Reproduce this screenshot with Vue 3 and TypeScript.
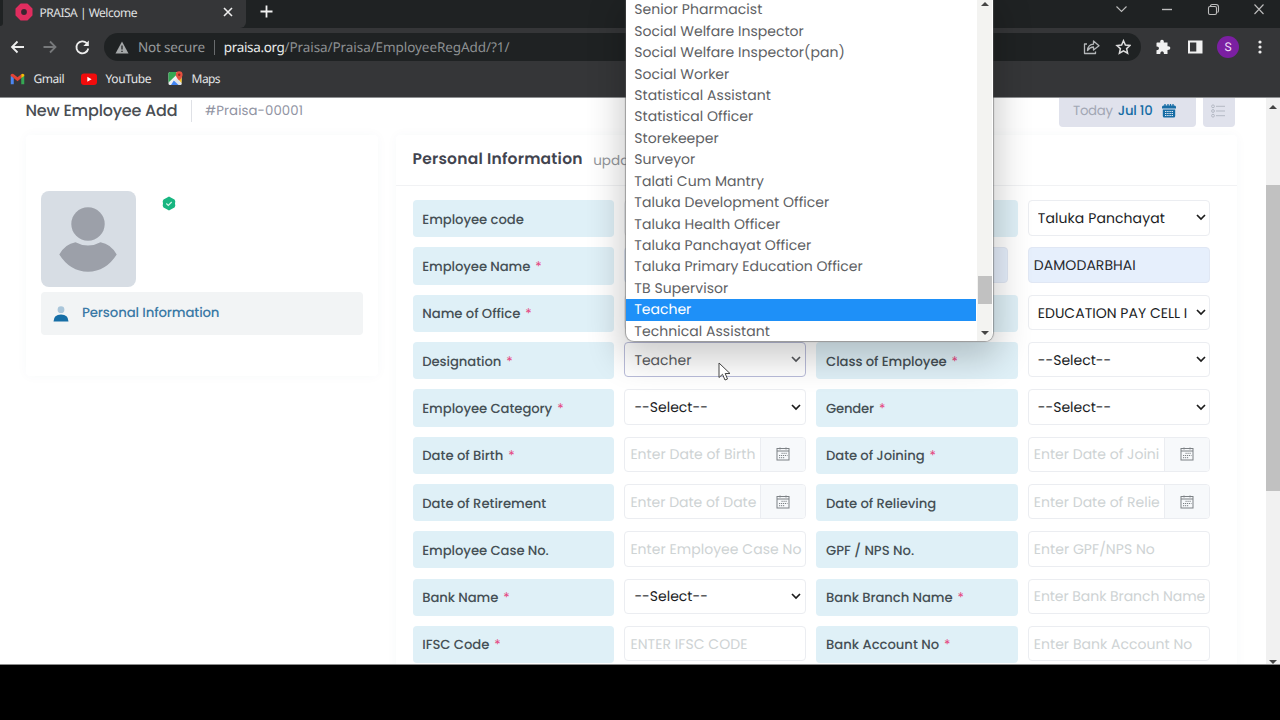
<script setup lang="ts">
import type { Directive } from 'vue'

type Label = { text: string; w: number; req?: boolean }
type Control = {
  kind: 'select' | 'input' | 'date' | 'filled' | 'focus'
  text: string
  w: number
}
type Row = { a: Label; b: Control; c: Label | null; d: Control }

/* Spreads the letters so that a text takes the given width in pixels. */
const vFit: Directive<HTMLElement, number> = {
  mounted(el, { value }) {
    const count = (el.textContent ?? '').length
    if (!value || count < 2) return
    const natural = el.getBoundingClientRect().width
    const step = (value - natural) / (count - 1)
    el.style.letterSpacing = `${step.toFixed(3)}px`
  },
}

const bookmarks = [
  { id: 'gmail', text: 'Gmail', w: 31 },
  { id: 'youtube', text: 'YouTube', w: 46 },
  { id: 'maps', text: 'Maps', w: 29 },
]

const options = [
  { text: 'Senior Pharmacist', w: 128 },
  { text: 'Social Welfare Inspector', w: 169.5 },
  { text: 'Social Welfare Inspector(pan)', w: 210.5 },
  { text: 'Social Worker', w: 95 },
  { text: 'Statistical Assistant', w: 136.5 },
  { text: 'Statistical Officer', w: 119 },
  { text: 'Storekeeper', w: 84.5 },
  { text: 'Surveyor', w: 61 },
  { text: 'Talati Cum Mantry', w: 129.5 },
  { text: 'Taluka Development Officer', w: 195 },
  { text: 'Taluka Health Officer', w: 146 },
  { text: 'Taluka Panchayat Officer', w: 177 },
  { text: 'Taluka Primary Education Officer', w: 228.5 },
  { text: 'TB Supervisor', w: 94 },
  { text: 'Teacher', w: 57 },
  { text: 'Technical Assistant', w: 135.5 },
]

const select = (text = '--Select--', w = 73.5): Control => ({ kind: 'select', text, w })

const rows: Row[] = [
  { a: { text: 'Employee code', w: 101.5 }, b: { kind: 'input', text: '', w: 0 }, c: { text: '', w: 0 }, d: select('Taluka Panchayat', 127) },
  { a: { text: 'Employee Name', w: 108, req: true }, b: { kind: 'filled', text: '', w: 0 }, c: null, d: { kind: 'filled', text: 'DAMODARBHAI', w: 102 } },
  { a: { text: 'Name of Office', w: 98, req: true }, b: { kind: 'select', text: '', w: 0 }, c: { text: '', w: 0 }, d: select('EDUCATION PAY CELL I', 149.5) },
  { a: { text: 'Designation', w: 79, req: true }, b: { kind: 'focus', text: 'Teacher', w: 57 }, c: { text: 'Class of Employee', w: 120.5, req: true }, d: select() },
  { a: { text: 'Employee Category', w: 130, req: true }, b: select(), c: { text: 'Gender', w: 48, req: true }, d: select() },
  { a: { text: 'Date of Birth', w: 81, req: true }, b: { kind: 'date', text: 'Enter Date of Birth', w: 125 }, c: { text: 'Date of Joining', w: 98.5, req: true }, d: { kind: 'date', text: 'Enter Date of Joini', w: 125.5 } },
  { a: { text: 'Date of Retirement', w: 124 }, b: { kind: 'date', text: 'Enter Date of Date', w: 126 }, c: { text: 'Date of Relieving', w: 110 }, d: { kind: 'date', text: 'Enter Date of Relie', w: 126 } },
  { a: { text: 'Employee Case No.', w: 126.5 }, b: { kind: 'input', text: 'Enter Employee Case No', w: 171 }, c: { text: 'GPF / NPS No.', w: 88 }, d: { kind: 'input', text: 'Enter GPF/NPS No', w: 121 } },
  { a: { text: 'Bank Name', w: 76, req: true }, b: select(), c: { text: 'Bank Branch Name', w: 126.5, req: true }, d: { kind: 'input', text: 'Enter Bank Branch Name', w: 171.5 } },
  { a: { text: 'IFSC Code', w: 67, req: true }, b: { kind: 'input', text: 'ENTER IFSC CODE', w: 117 }, c: { text: 'Bank Account No', w: 113, req: true }, d: { kind: 'input', text: 'Enter Bank Account No', w: 158.5 } },
]
</script>

<template>
  <div class="screen">
    <header class="chrome">
      <div class="tabs">
        <div class="tab-edge"></div>
        <div class="tab">
          <svg class="favicon" width="18" height="18" viewBox="0 0 18 18">
            <path d="M6 1.500H12L16.500 6V12L12 16.500H6L1.500 12V6Z" fill="#e02d5f" stroke="#e02d5f" stroke-width="2" stroke-linejoin="round" />
            <circle cx="9" cy="9" r="2.900" fill="#3a2530" />
          </svg>
          <span v-fit="98" class="tab-title">PRAISA | Welcome</span>
          <svg class="tab-close" width="10" height="10" viewBox="0 0 10 10"><path d="M1 1 9 9M9 1 1 9" stroke="#eee" stroke-width="1.600" /></svg>
        </div>
        <svg class="plus" width="13" height="13" viewBox="0 0 13 13"><path d="M6.500 .5V12.500M.5 6.500H12.500" stroke="#f2f2f2" stroke-width="1.800" /></svg>
        <svg class="win" width="150" height="14" viewBox="0 0 150 14" fill="none" stroke="#bdbdbd" stroke-width="1.100">
          <path d="M1.500 4.500 6.500 9.500 11.500 4.500" />
          <path d="M47 7.500H57" stroke-width="1.400" />
          <rect x="93.500" y="4.500" width="8" height="8" rx="1.500" />
          <path d="M95.500 4V3.500Q96 2.500 97.500 2.500H101Q103.500 2.500 103.500 5V8.500Q103.500 10 102.500 10.500" />
          <path d="M139.500 2.500 148.500 12M148.500 2.500 139.500 12" />
        </svg>
      </div>

      <div class="toolbar">
        <svg class="nav" width="84" height="16" viewBox="0 0 84 16" fill="none" stroke-width="1.800">
          <path d="M15 8H3.500M8.500 2.500 3 8 8.500 13.500" stroke="#eee" />
          <path d="M34.500 8H46M41 2.500 46.500 8 41 13.500" stroke="#77797b" />
          <path d="M77.800 4.200A6 6 0 1 0 79.300 9.500" stroke="#eee" />
          <path d="M79.800 1.500V7H74.300Z" fill="#eee" />
        </svg>
        <div class="omnibox">
          <svg class="warn" width="14" height="13" viewBox="0 0 14 13"><path d="M7 .5 13.500 12.500H.5Z" fill="#a5a8a9" /><path d="M7 4.500V8.500M7 9.700V11" stroke="#202324" stroke-width="1.300" /></svg>
          <span v-fit="67" class="insecure">Not secure</span>
          <i class="omni-sep"></i>
          <span v-fit="61" class="host">praisa.org</span>
          <span v-fit="225" class="path">/Praisa/Praisa/EmployeeRegAdd/?1/</span>
          <svg class="omni-icons" width="48" height="16" viewBox="0 0 48 16" fill="none" stroke="#b4b7b9" stroke-width="1.300" stroke-linejoin="round">
            <path d="M4 5H1.500V14.500H12.500V12.500" />
            <path d="M4.500 11.500Q5 5.500 10.500 5.200V2L16 6.800 10.500 11V8Q7 8 4.500 11.500Z" />
            <path d="M40.500 1.700 42.400 6 47 6.500 43.600 9.600 44.600 14.200 40.500 11.800 36.400 14.200 37.400 9.600 34 6.500 38.600 6Z" stroke="#dedede" stroke-width="1.500" stroke-linejoin="miter" />
          </svg>
        </div>
        <svg class="ext" width="48" height="16" viewBox="0 0 48 16">
          <path d="M2 3.500H5.300Q4.800 .8 7 .8T8.800 3.500H12.500V7.200Q15.400 6.900 15.400 9T12.500 11V15H9Q9 12.300 7.100 12.300T5.200 15H1.500V11.300Q4 11.200 4 9.200T1.500 7.400V4Z" fill="#f1f1f1" />
          <path d="M33 1.500H47.500V14.500H33Z M35 3.500V12.500H41.300V3.500Z" fill="#f1f1f1" fill-rule="evenodd" />
        </svg>
        <div class="avatar">S</div>
        <svg class="dots" width="4" height="14" viewBox="0 0 4 14" fill="#eee"><circle cx="2" cy="2" r="1.600" /><circle cx="2" cy="7" r="1.600" /><circle cx="2" cy="12" r="1.600" /></svg>
      </div>

      <div class="bookmarks">
        <div v-for="b in bookmarks" :key="b.id" class="bookmark" :class="b.id">
          <svg v-if="b.id === 'gmail'" width="15" height="14" viewBox="0 0 16 14">
            <path d="M.8 3V12.500H4V6Z" fill="#4c86f0" />
            <path d="M15.200 3V12.500H12V6Z" fill="#35a853" />
            <path d="M.8 2.500Q2 .8 4 2L8 5.200 12 2V6L8 9.300 4 6 .8 3.700Z" fill="#e24335" />
            <path d="M12 2Q14 .8 15.200 2.500V3.700L12 6Z" fill="#f8bb08" />
          </svg>
          <svg v-else-if="b.id === 'youtube'" width="16" height="14" viewBox="0 0 16 14">
            <rect x="0" y="1.500" width="16" height="11.500" rx="3" fill="#f20c0c" /><path d="M6.300 4.800 10.600 7.200 6.300 9.700Z" fill="#fff" />
          </svg>
          <svg v-else width="15" height="15" viewBox="0 0 15 15">
            <rect x=".5" y="1" width="13" height="13" rx="1.500" fill="#eef0f2" />
            <path d="M.5 2.500Q.5 1 2 1H8.500L8.300 4 .5 11.500Z" fill="#34a853" />
            <path d="M9 7.500 13.500 12.500V13Q13.500 14 12 14H8.500L5.500 10.800Z" fill="#dfe3e8" />
            <path d="M5.800 9.500 10.500 14H3Z" fill="#4285f4" />
            <path d="M10.500 8.500 13.500 6V12Z" fill="#fbc117" />
            <path d="M11.200 9.500Q7.800 6 7.800 3.700A3.400 3.400 0 0 1 14.600 3.700Q14.600 6 11.200 9.500Z" fill="#e5503f" />
            <circle cx="11.200" cy="3.700" r="1.200" fill="#8d2a20" />
          </svg>
          <span v-fit="b.w">{{ b.text }}</span>
        </div>
      </div>
    </header>

    <main class="page">
      <div class="content">
        <div class="heading">
          <h1><span v-fit="152">New Employee Add</span></h1>
          <i class="head-sep"></i>
          <span v-fit="98" class="ref">#Praisa-00001</span>
          <div class="today">
            <span v-fit="40" class="today-word">Today</span>
            <span v-fit="35" class="today-date">Jul 10</span>
            <svg width="14" height="14" viewBox="0 0 14 14">
              <path d="M0 3Q0 1.500 1.500 1.500H12.500Q14 1.500 14 3V4.500H0ZM.8 5.500H13.200V12Q13.200 13.500 11.700 13.500H2.300Q.8 13.500 .8 12Z" fill="#176da5" />
              <path d="M3 0V3M6 0V3M8.500 0V3M11 0V3" stroke="#176da5" stroke-width="1.300" />
              <path d="M3 7.500H11M3 9.500H11M3 11.500H11" stroke="#e3e9f3" stroke-width="1.200" stroke-dasharray="1.400 .8" />
            </svg>
          </div>
          <div class="listbtn">
            <svg width="15" height="14" viewBox="0 0 15 14" fill="none" stroke="#b4b9c4"><circle cx="2" cy="2.300" r="1.400" /><circle cx="2" cy="7" r="1.400" /><circle cx="2" cy="11.700" r="1.400" /><path d="M5 2.300H14M5 7H14M5 11.700H14" /></svg>
          </div>
        </div>

        <div class="cards">
          <aside class="card profile">
            <div class="who">
              <svg class="photo" width="95" height="96" viewBox="0 0 95 96">
                <rect width="95" height="96" rx="8" fill="#d7dde4" />
                <circle cx="47" cy="33" r="16.700" fill="#9ca0a9" />
                <path d="M18.300 63.500Q24 53 34.500 51.200Q47 58 59.500 51.200Q70 53 75.700 63.500Q65 80.500 47 80.700Q29 80.500 18.300 63.500Z" fill="#9ca0a9" />
              </svg>
              <svg class="verified" width="14" height="15" viewBox="0 0 14 15"><path d="M7 .5 9.200 1.800 12.500 3.500 13.300 5.200 13 7.500 13.300 9.800 12.500 11.500 9.200 13.200 7 14.500 4.800 13.200 1.500 11.500 .7 9.800 1 7.500 .7 5.200 1.500 3.500 4.800 1.800Z" fill="#18b681" /><path d="M4.300 7.500 6.300 9.500 9.700 6" fill="none" stroke="#d6f7ea" stroke-width="1.100" /></svg>
            </div>
            <div class="menu-item">
              <svg width="16" height="16" viewBox="0 0 16 16"><circle cx="8" cy="3.700" r="3.400" fill="#aac6da" /><path d="M.5 15.500Q.8 8.600 8 8.600T15.500 15.500Z" fill="#166ea6" /></svg>
              <span v-fit="137.500">Personal Information</span>
            </div>
          </aside>

          <section class="card form">
            <div class="form-head">
              <span v-fit="170" class="form-title">Personal Information</span>
              <span class="form-sub">upda</span>
            </div>
            <div class="rows">
              <div v-for="(r, i) in rows" :key="i" class="row">
                <div class="label"><span v-fit="r.a.w">{{ r.a.text }}</span><b v-if="r.a.req">*</b></div>
                <div class="control" :class="r.b.kind">
                  <div class="value"><span v-fit="r.b.w">{{ r.b.text }}</span></div>
                  <svg v-if="r.b.kind === 'select' || r.b.kind === 'focus'" class="chev" width="10" height="7" viewBox="0 0 10 7"><path d="M1 1 5 5 9 1" /></svg>
                  <div v-if="r.b.kind === 'date'" class="cal">
                    <svg width="14" height="14" viewBox="0 0 14 14"><rect x="1" y="1.500" width="12" height="11.500" /><path d="M1 4H13M4 .5V2.500M10 .5V2.500" /><path d="M5.500 6.300H11.500M3 8.500H11.500M3 10.700H9" stroke-dasharray="1.200 .8" /></svg>
                  </div>
                </div>
                <div v-if="r.c" class="label"><span v-fit="r.c.w">{{ r.c.text }}</span><b v-if="r.c.req">*</b></div>
                <div v-else class="control filled middle"></div>
                <div class="control last" :class="r.d.kind">
                  <div class="value"><span v-fit="r.d.w">{{ r.d.text }}</span></div>
                  <svg v-if="r.d.kind === 'select'" class="chev" width="10" height="7" viewBox="0 0 10 7"><path d="M1 1 5 5 9 1" /></svg>
                  <div v-if="r.d.kind === 'date'" class="cal">
                    <svg width="14" height="14" viewBox="0 0 14 14"><rect x="1" y="1.500" width="12" height="11.500" /><path d="M1 4H13M4 .5V2.500M10 .5V2.500" /><path d="M5.500 6.300H11.500M3 8.500H11.500M3 10.700H9" stroke-dasharray="1.200 .8" /></svg>
                  </div>
                </div>
              </div>
            </div>
          </section>
        </div>
      </div>
      <div class="scrollbar">
        <i class="arrow up"></i>
        <i class="thumb"></i>
        <i class="arrow down"></i>
      </div>
    </main>

    <div class="dropdown">
      <ul class="options">
        <li v-for="o in options" :key="o.text" :class="{ on: o.text === 'Teacher' }"><span v-fit="o.w">{{ o.text }}</span></li>
      </ul>
      <div class="drop-scroll">
        <i class="arrow up"></i>
        <i class="thumb"></i>
        <i class="arrow down"></i>
      </div>
    </div>

    <svg class="cursor" width="14" height="20" viewBox="0 0 14 20"><path d="M1 1V15.500L4.500 12.300 7 18 9.500 17 7.200 11.500H12Z" fill="#fff" stroke="#444" stroke-width="1" stroke-linejoin="round" /></svg>
  </div>
</template>

<style>
body {
  background: #000;
  overflow: hidden;
}
</style>

<style scoped>
.screen {
  position: relative;
  width: 1280px;
  height: 720px;
  overflow: hidden;
  background: #000;
  font-family: Poppins, Inter, "Liberation Sans", sans-serif;
  text-rendering: geometricPrecision;
}
.screen * { box-sizing: border-box; }
span { display: inline-block; white-space: pre; }
svg { display: block; flex: none; }

.chrome {
  height: 98px;
  background: #353638;
  font-family: "Segoe UI", "Noto Sans", "Open Sans", sans-serif;
}
.tabs { display: flex; height: 28px; background: #1f2223; align-items: flex-start; }
.tab-edge { width: 3px; height: 26px; border-radius: 0 0 4px 0; background: #1f2223; position: relative; z-index: 1; }
.tabs .tab {
  width: 246px;
  height: 28px;
  margin-left: -3px;
  padding: 0 0 4px 15px;
  background: #353638;
  border-radius: 0 0 6px 0;
  display: flex;
  align-items: center;
}
.tab-title { margin-left: 6.500px; font-size: 12px; color: #e0e2e3; }
.tab-close { margin-left: 86px; }
.plus { margin: 5px 0 0 14px; }
.win { margin: 2px 15.500px 0 auto; }
.toolbar { display: flex; height: 38px; align-items: center; }
.nav { margin-left: 9px; }
.omnibox {
  width: 1037px;
  height: 28px;
  margin-left: 11px;
  border-radius: 14px;
  background: #1f2223;
  display: flex;
  align-items: center;
  padding-left: 11px;
  font-size: 13.500px;
}
.insecure { margin-left: 9px; color: #96999b; }
.omni-sep { width: 1px; height: 15px; margin: 0 9px 0 9px; background: #696c6e; }
.host { color: #e8eaea; }
.path { color: #8d9092; }
.omni-icons { margin: 0 10px 0 auto; }
.ext { margin-left: 14px; }
.avatar {
  width: 22px;
  height: 22px;
  margin-left: 14px;
  border-radius: 50%;
  background: #7b1fa2;
  color: #f1dff7;
  font: 12px/22px Roboto, sans-serif;
  text-align: center;
}
.dots { margin-left: 19px; }
.bookmarks { display: flex; height: 32px; border-bottom: 1px solid #8e9092; align-items: center; padding: 0 0 6px 10px; font-size: 12px; color: #e4e6e8; }
.bookmark { display: flex; align-items: center; }
.bookmark span { margin-left: 8.500px; }
.youtube, .maps { margin-left: 17px; }

.page { display: flex; height: 567px; overflow: hidden; background: #fff; border-bottom: 1px solid #8c8c8c; }
.content { flex: 1; min-width: 0; padding-left: 26px; }
.heading { display: flex; height: 37px; align-items: flex-start; }
h1 { width: 151px; margin: 1px 0 0 -0.5px; font-size: 16px; line-height: 24px; font-weight: 500; color: #4a4e53; }
.head-sep { width: 1px; height: 22px; margin: 2px 13px 0 14.500px; background: #dfe1e6; }
.ref { margin-top: 1px; font-size: 13.300px; line-height: 24px; color: #9194a3; }
.today, .listbtn { display: flex; align-items: center; height: 29px; background: #e0e2ec; border-radius: 0 0 4px 4px; }
.today { width: 137px; margin-left: auto; padding: 0 0 3px 14px; font-size: 13.300px; }
.today-word { color: #a3a8b5; }
.today-date { margin-left: 5px; color: #176da5; font-weight: 500; }
.today svg { margin-left: 10px; }
.listbtn { width: 32px; margin: 0 31px 0 7px; padding: 0 0 3px 8px; }
.cards { display: flex; align-items: flex-start; gap: 18px; }
.card { background: #fff; border-radius: 4px; box-shadow: 0 0 12px rgba(70, 80, 100, 0.035); }
.profile { width: 352px; height: 241px; padding: 55.600px 15px 0; }
.who { display: flex; align-items: flex-start; }
.verified { margin: 5.600px 0 0 26px; }
.menu-item { display: flex; align-items: center; width: 322px; height: 43px; margin-top: 5px; padding: 0 0 0 12px; background: #f2f4f5; border-radius: 4px; font-size: 13.300px; font-weight: 500; color: #3c7aa6; }
.menu-item svg { margin-top: 2px; }
.menu-item span { margin-left: 13px; }
.form { width: 841px; height: 620px; }
.form-head { display: flex; align-items: center; height: 50.500px; border-bottom: 1px solid #f1f2f4; padding-left: 16.500px; }
.form-title { font-size: 15.500px; font-weight: 600; color: #42444f; }
.form-sub { margin: 2px 0 0 10.500px; font-size: 13.500px; color: #93969b; }
.rows { padding: 14.700px 0 0 16.600px; }
.row { display: flex; height: 47.300px; align-items: flex-start; }
.label {
  display: flex;
  align-items: center;
  width: 201.300px;
  height: 37.200px;
  padding: 2px 0 0 9.700px;
  border-radius: 4px;
  background: #dff0f7;
  color: #465056;
  font-size: 13.200px;
  font-weight: 500;
}
.label b { margin-left: 5px; font-weight: 400; color: #e5437c; }
.control {
  display: flex;
  align-items: center;
  width: 181.500px;
  height: 35.400px;
  margin: 0 10.500px;
  border: 1px solid #ebedf1;
  border-radius: 4px;
  background: #fff;
  font-size: 14px;
  color: #ced3d4;
}
.control.last { margin-right: 0; width: 182px; }
.value { flex: 1; min-width: 0; overflow: hidden; margin-left: 5px; padding-top: 1.200px; }
.select .value, .focus .value { margin-left: 9px; }
.control.last .value { margin-left: 4.600px; }
.control.last.select .value { margin-left: 8.600px; }
.select { color: #1b1d1f; }
.focus { color: #5a5c61; border-color: #b9bcd9; }
.filled { background: #e6effc; color: #26292e; border-color: #e0e7f4; }
.control.middle { width: 191.500px; margin: 0; }
.middle + .control.last { margin-left: 20.300px; }
.chev { margin: 0 3.500px 0 8.500px; }
.chev path { fill: none; stroke: #1c1c1c; stroke-width: 1.700; }
.focus .chev path { stroke: #56585c; }
.cal { display: flex; align-items: center; justify-content: center; width: 45px; height: 33.400px; border-left: 1px solid #ebedf1; background: #f7f9fb; border-radius: 0 3px 3px 0; }
.cal svg { fill: none; stroke: #7c8185; stroke-width: 1; }

.scrollbar { width: 14px; background: #f1f1f1; display: flex; flex-direction: column; align-items: center; }
.arrow { display: block; width: 0; height: 0; border: 4px solid transparent; }
.arrow.up { border-top: 0; border-bottom-color: #454545; }
.arrow.down { border-bottom: 0; border-top-color: #454545; }
.scrollbar .up { margin-top: 7px; }
.scrollbar .thumb { width: 14px; height: 306px; margin-top: 76px; background: #c1c1c1; }
.scrollbar .down { margin: auto 0 0; }

.dropdown {
  position: absolute;
  left: 626px;
  top: -2px;
  width: 367px;
  height: 343px;
  display: flex;
  overflow: hidden;
  background: #fff;
  border-radius: 0 0 8px 8px;
  box-shadow: 0 0 1px 1px rgba(90, 90, 90, 0.5), 0 12px 34px 6px rgba(0, 0, 0, 0.2);
}
.options { width: 350px; margin: 0; padding: 1.300px 0 0; list-style: none; font-size: 14px; color: #5e6164; }
.options li { height: 21.430px; line-height: 21.430px; padding-left: 8.300px; }
.options li.on { background: #1e90f8; color: #fff; }
.drop-scroll { width: 15px; margin-left: 1px; background: #f3f3f1; display: flex; flex-direction: column; align-items: center; }
.drop-scroll .up { margin-top: 4px; }
.drop-scroll .thumb { width: 14px; height: 28px; margin-top: 270px; background: #c1c1c1; }
.drop-scroll .down { margin: auto 0 6px; }

.cursor { position: absolute; left: 718px; top: 362px; }
</style>
